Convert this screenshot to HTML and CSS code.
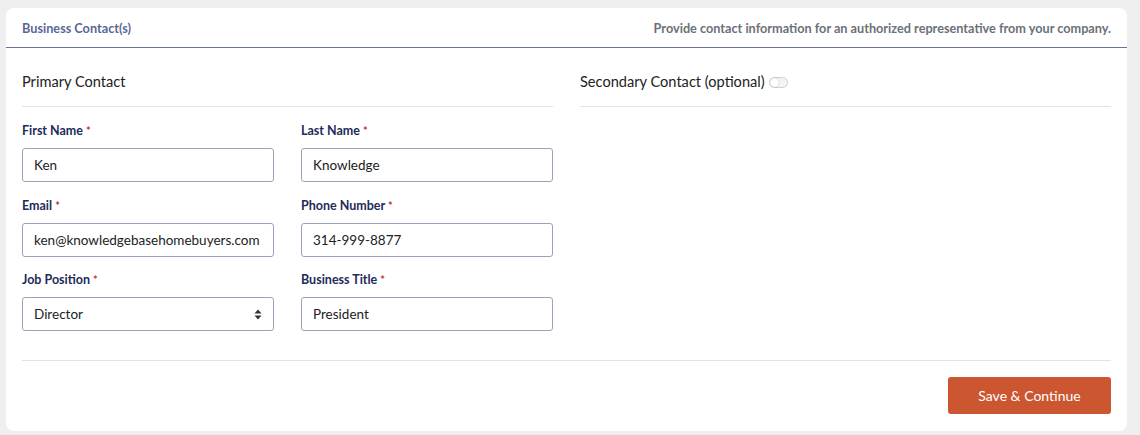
FILE: index.html
```html
<!DOCTYPE html>
<html lang="en">
<head>
    <meta charset="UTF-8">
    <title>Business Contacts</title>
    <link rel="stylesheet" href="styles.css">
</head>
<body>
    <div class="card">
        <header class="card-header">
            <h2>Business Contact(s)</h2>
            <p>Provide contact information for an authorized representative from your company.</p>
        </header>

        <div class="card-body">
            <div class="columns">
                <section class="contact">
                    <h3 class="section-title">Primary Contact</h3>
                    <div class="fields">
                        <div class="field">
                            <label>First Name <span class="req">*</span></label>
                            <input type="text" value="Ken">
                        </div>
                        <div class="field">
                            <label>Last Name <span class="req">*</span></label>
                            <input type="text" value="Knowledge">
                        </div>
                        <div class="field">
                            <label>Email <span class="req">*</span></label>
                            <input type="text" value="ken@knowledgebasehomebuyers.com">
                        </div>
                        <div class="field">
                            <label>Phone Number <span class="req">*</span></label>
                            <input type="text" value="314-999-8877">
                        </div>
                        <div class="field">
                            <label>Job Position <span class="req">*</span></label>
                            <div class="select-wrap">
                                <select>
                                    <option>Director</option>
                                    <option>Manager</option>
                                    <option>Owner</option>
                                </select>
                                <svg class="select-arrow" width="8" height="11" viewBox="0 0 8 11">
                                    <path d="M4 0.5 L7.5 4.5 H0.5 Z M4 10.5 L7.5 6.5 H0.5 Z" fill="#333"/>
                                </svg>
                            </div>
                        </div>
                        <div class="field">
                            <label>Business Title <span class="req">*</span></label>
                            <input type="text" value="President">
                        </div>
                    </div>
                </section>

                <section class="contact">
                    <h3 class="section-title">
                        Secondary Contact (optional)
                        <span class="toggle"><span class="knob"></span></span>
                    </h3>
                </section>
            </div>

            <div class="actions">
                <button type="button">Save &amp; Continue</button>
            </div>
        </div>
    </div>
</body>
</html>
```

FILE: styles.css
```css
body {
    font-family: 'Lato', 'Open Sans', sans-serif;
    background-color: #efefef;
    margin: 0;
    padding: 8px 13px 4px 6px;
}
.card {
    background-color: white;
    border-radius: 8px;
}
.card-header {
    display: flex;
    justify-content: space-between;
    align-items: center;
    height: 39px;
    padding: 0 16px;
    border-bottom: 1px solid #65719c;
}
.card-header h2 {
    margin: 0;
    font-size: 12.7px;
    font-weight: 700;
    color: #5a6794;
}
.card-header p {
    margin: 0;
    font-size: 12.7px;
    font-weight: 700;
    color: #6b7177;
}
.card-body {
    padding: 0 16px 17px;
}
.columns {
    display: grid;
    grid-template-columns: 1fr 1fr;
    column-gap: 27px;
    padding-bottom: 28.5px;
    border-bottom: 1px solid #e2e2e2;
}
.section-title {
    display: flex;
    align-items: center;
    margin: 0;
    padding: 24px 0 14px;
    font-size: 14.6px;
    font-weight: 400;
    line-height: 20px;
    color: #222;
    border-bottom: 1px solid #e2e2e2;
}
.toggle {
    display: inline-block;
    position: relative;
    width: 17px;
    height: 9px;
    margin-left: 4px;
    border: 1px solid #cfcfcf;
    border-radius: 6px;
    background-color: #f4f4f4;
}
.toggle .knob {
    position: absolute;
    left: 0;
    top: 0;
    width: 9px;
    height: 9px;
    border-radius: 50%;
    background-color: white;
    box-shadow: 0 0 1px rgba(0, 0, 0, 0.4);
}
.fields {
    display: grid;
    grid-template-columns: 1fr 1fr;
    column-gap: 27px;
    row-gap: 15.5px;
    padding-top: 16px;
}
.field label {
    display: block;
    font-size: 12.5px;
    font-weight: 700;
    line-height: 16px;
    color: #232b5a;
    margin-bottom: 9px;
}
.req {
    color: #c0392b;
    font-size: 11px;
}
.field input, .field select {
    box-sizing: border-box;
    width: 100%;
    height: 34px;
    padding: 0 11px;
    border: 1px solid #9ea2b8;
    border-radius: 3px;
    font-family: 'Lato', 'Open Sans', sans-serif;
    font-size: 13.5px;
    color: #222;
    background-color: white;
    outline: none;
}
.select-wrap {
    position: relative;
}
.field select {
    appearance: none;
    -webkit-appearance: none;
}
.select-arrow {
    position: absolute;
    right: 12px;
    top: 12px;
    pointer-events: none;
}
.actions {
    display: flex;
    justify-content: flex-end;
    padding-top: 16.5px;
}
.actions button {
    width: 163px;
    height: 37px;
    border: none;
    border-radius: 3px;
    background-color: #cc5630;
    color: white;
    font-family: 'Lato', 'Open Sans', sans-serif;
    font-size: 14px;
    cursor: pointer;
}
```
